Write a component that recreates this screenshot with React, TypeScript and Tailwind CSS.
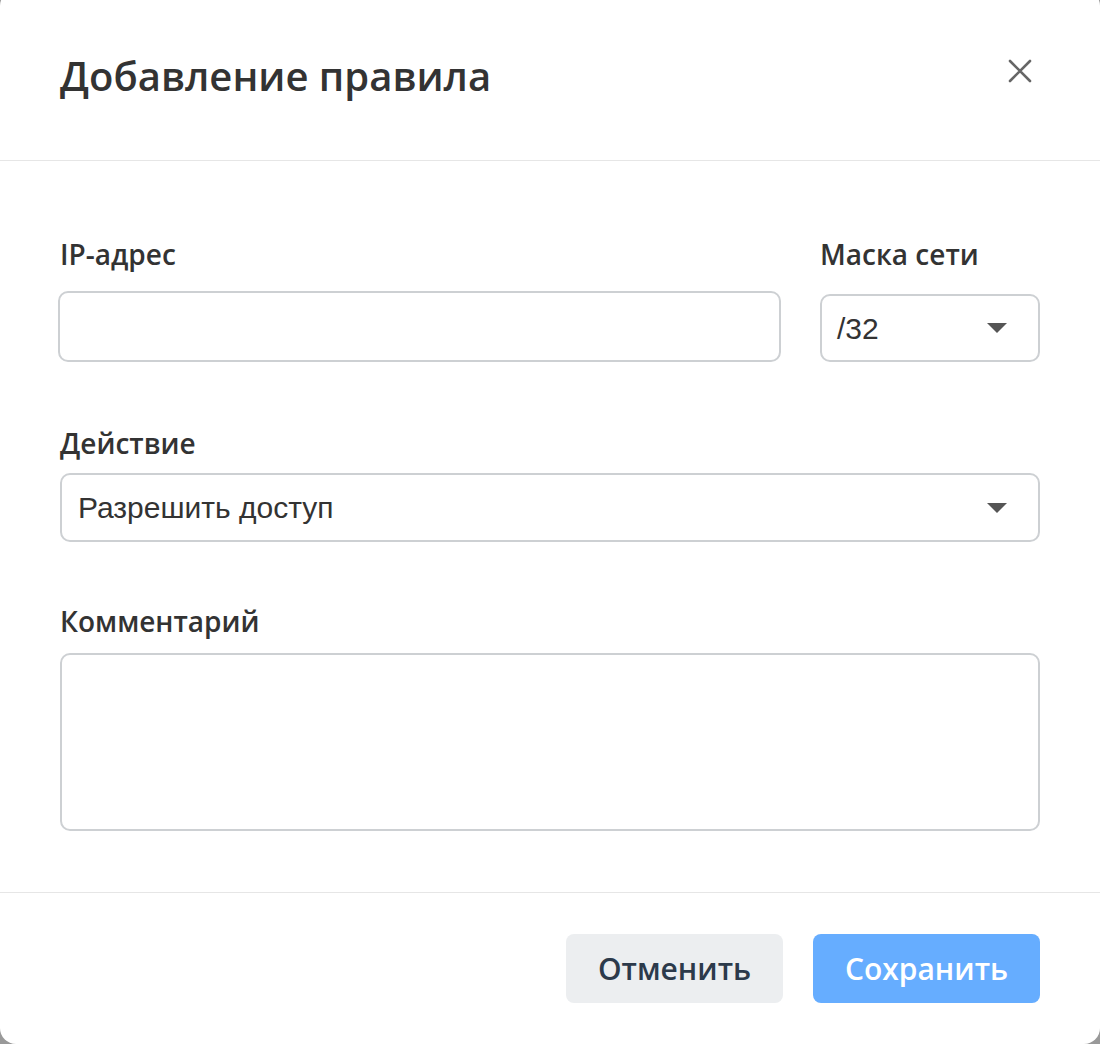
import React from "react";

const Caret = () => (
  <svg width="20" height="10" viewBox="0 0 20 10" className="shrink-0">
    <polygon points="0,0 20,0 10,10" fill="#555" />
  </svg>
);

export default function App() {
  const head = { fontFamily: '"Open Sans", "Noto Sans", sans-serif' };
  const inp = { fontFamily: '"Liberation Sans", Arial, sans-serif' };
  return (
    <div className="w-[1100px] h-[1044px] overflow-hidden bg-[#999999]">
      <div className="-mt-[10px] h-[1054px] bg-white rounded-[16px] flex flex-col">
        {/* Header */}
        <div className="shrink-0 h-[171px] border-b border-[#e6e6e6] flex justify-between items-start pt-[61px] pl-[60px] pr-[66px]">
          <h1 className="text-[40px] leading-[50px] font-semibold text-[#333333]" style={head}>
            Добавление правила
          </h1>
          <button className="mt-[6px] w-[28px] h-[28px]">
            <svg width="28" height="28" viewBox="0 0 28 28">
              <path d="M4 4 L24 24 M24 4 L4 24" stroke="#666666" strokeWidth="2.6" strokeLinecap="round" />
            </svg>
          </button>
        </div>

        {/* Body */}
        <div className="shrink-0 px-[60px] pt-[75px] pb-[61px] flex flex-col" style={head}>
          <div className="flex gap-[39px] items-end">
            <div className="flex-1 flex flex-col">
              <label className="text-[28px] leading-[36px] font-semibold text-[#333333]">IP-адрес</label>
              <div className="mt-[19px] -ml-[2px] h-[71px] border-2 border-[#cdd0d3] rounded-[10px]" />
            </div>
            <div className="w-[220px] flex flex-col">
              <label className="text-[28px] leading-[36px] font-semibold text-[#333333]">Маска сети</label>
              <div className="mt-[22px] h-[68px] border-2 border-[#cdd0d3] rounded-[10px] flex items-center justify-between pl-[15px] pr-[31px]">
                <span className="text-[30px] text-[#333333]" style={inp}>/32</span>
                <Caret />
              </div>
            </div>
          </div>

          <label className="mt-[63px] text-[28px] leading-[36px] font-semibold text-[#333333]">Действие</label>
          <div className="mt-[12px] h-[69px] border-2 border-[#cdd0d3] rounded-[10px] flex items-center justify-between pl-[16px] pr-[31px]">
            <span className="text-[30px] text-[#333333]" style={inp}>Разрешить доступ</span>
            <Caret />
          </div>

          <label className="mt-[61px] text-[28px] leading-[36px] font-semibold text-[#333333]">Комментарий</label>
          <div className="mt-[14px] h-[178px] border-2 border-[#cdd0d3] rounded-[10px]" />
        </div>

        {/* Footer */}
        <div className="shrink-0 h-[152px] border-t border-[#e6e6e6] pt-[41px] pr-[60px] flex justify-end items-start gap-[30px]" style={head}>
          <button className="w-[217px] h-[69px] rounded-[8px] bg-[#eceef0] text-[30px] font-semibold text-[#2c3a4b]">
            Отменить
          </button>
          <button className="w-[227px] h-[69px] rounded-[8px] bg-[#66adff] text-[30px] font-semibold text-white">
            Сохранить
          </button>
        </div>
      </div>
    </div>
  );
}
